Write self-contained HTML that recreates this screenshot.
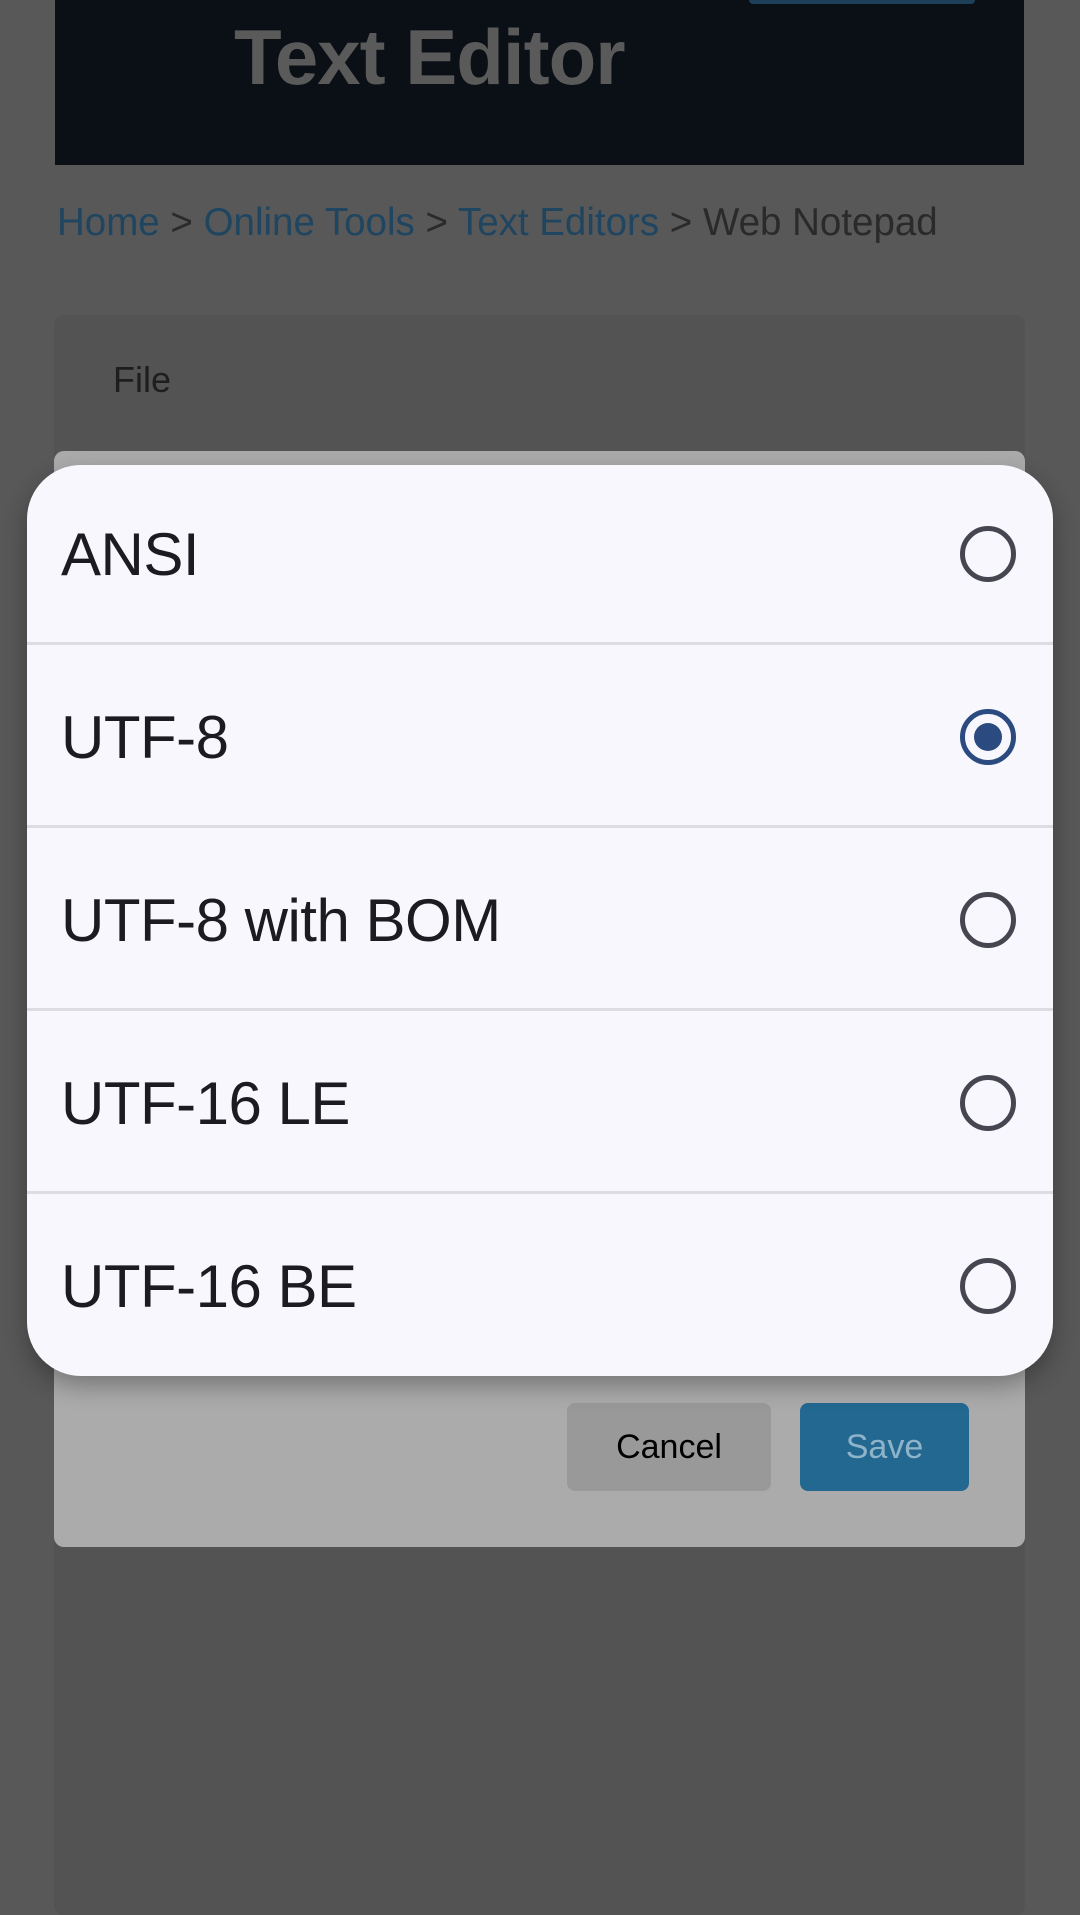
<!DOCTYPE html>
<html><head><meta charset="utf-8"><style>
*{margin:0;padding:0;box-sizing:border-box}
body{width:1080px;height:1887px;background:#585858;position:relative;overflow:hidden;font-family:"Liberation Sans",sans-serif}
.abs{position:absolute}
.t{position:absolute;left:34px;top:58px;font-size:60px;color:#1c1b1f;letter-spacing:-0.5px}
</style></head><body>
<div class="abs" style="left:55px;top:0;width:969px;height:165px;background:#0b1016"></div>
<div class="abs" style="left:749px;top:0;width:226px;height:4px;background:#1d3f5a;border-radius:0 0 6px 6px"></div>
<div class="abs" style="left:234px;top:12px;font-size:78px;font-weight:bold;color:#5a5a5a;letter-spacing:-1px">Text Editor</div>
<div class="abs" style="left:57px;top:201px;font-size:38.5px;color:#2a2a2a;white-space:nowrap"><span style="color:#1f4560">Home</span> &gt; <span style="color:#1f4560">Online Tools</span> &gt; <span style="color:#1f4560">Text Editors</span> &gt; Web Notepad</div>
<div class="abs" style="left:54px;top:315px;width:971px;height:1600px;background:#535353;border-radius:10px"></div>
<div class="abs" style="left:113px;top:359px;font-size:36px;color:#1e1e1e">File</div>
<div class="abs" style="left:54px;top:451px;width:971px;height:1096px;background:#ababab;border-radius:10px"></div>
<div class="abs" style="left:567px;top:1403px;width:204px;height:88px;background:#999;border-radius:8px;font-size:34px;color:#000;text-align:center;line-height:88px">Cancel</div>
<div class="abs" style="left:800px;top:1403px;width:169px;height:88px;background:#236891;border-radius:8px;font-size:34px;color:#8fb4c9;text-align:center;line-height:88px">Save</div>
<div class="abs" style="left:27px;top:465px;width:1026px;height:911px;background:#f7f7fd;border-radius:54px;box-shadow:0 10px 24px rgba(0,0,0,.3);overflow:hidden">
<div style="height:180px;border-bottom:3px solid #dcdce2;position:relative"><span class="t" style="top:55px">ANSI</span></div>
<div style="height:183px;border-bottom:3px solid #dcdce2;position:relative"><span class="t">UTF-8</span></div>
<div style="height:183px;border-bottom:3px solid #dcdce2;position:relative"><span class="t">UTF-8 with BOM</span></div>
<div style="height:183px;border-bottom:3px solid #dcdce2;position:relative"><span class="t">UTF-16 LE</span></div>
<div style="height:182px;position:relative"><span class="t">UTF-16 BE</span></div>
</div>
<svg class="abs" style="left:0;top:0" width="1080" height="1887">
<g fill="none" stroke="#45464f" stroke-width="5">
<circle cx="988" cy="554" r="25.5"/>
<circle cx="988" cy="920" r="25.5"/>
<circle cx="988" cy="1103" r="25.5"/>
<circle cx="988" cy="1286" r="25.5"/>
</g>
<circle cx="988" cy="737" r="25.5" fill="none" stroke="#2b4a80" stroke-width="5"/>
<circle cx="988" cy="737" r="14" fill="#2b4a80"/>
</svg>
</body></html>
